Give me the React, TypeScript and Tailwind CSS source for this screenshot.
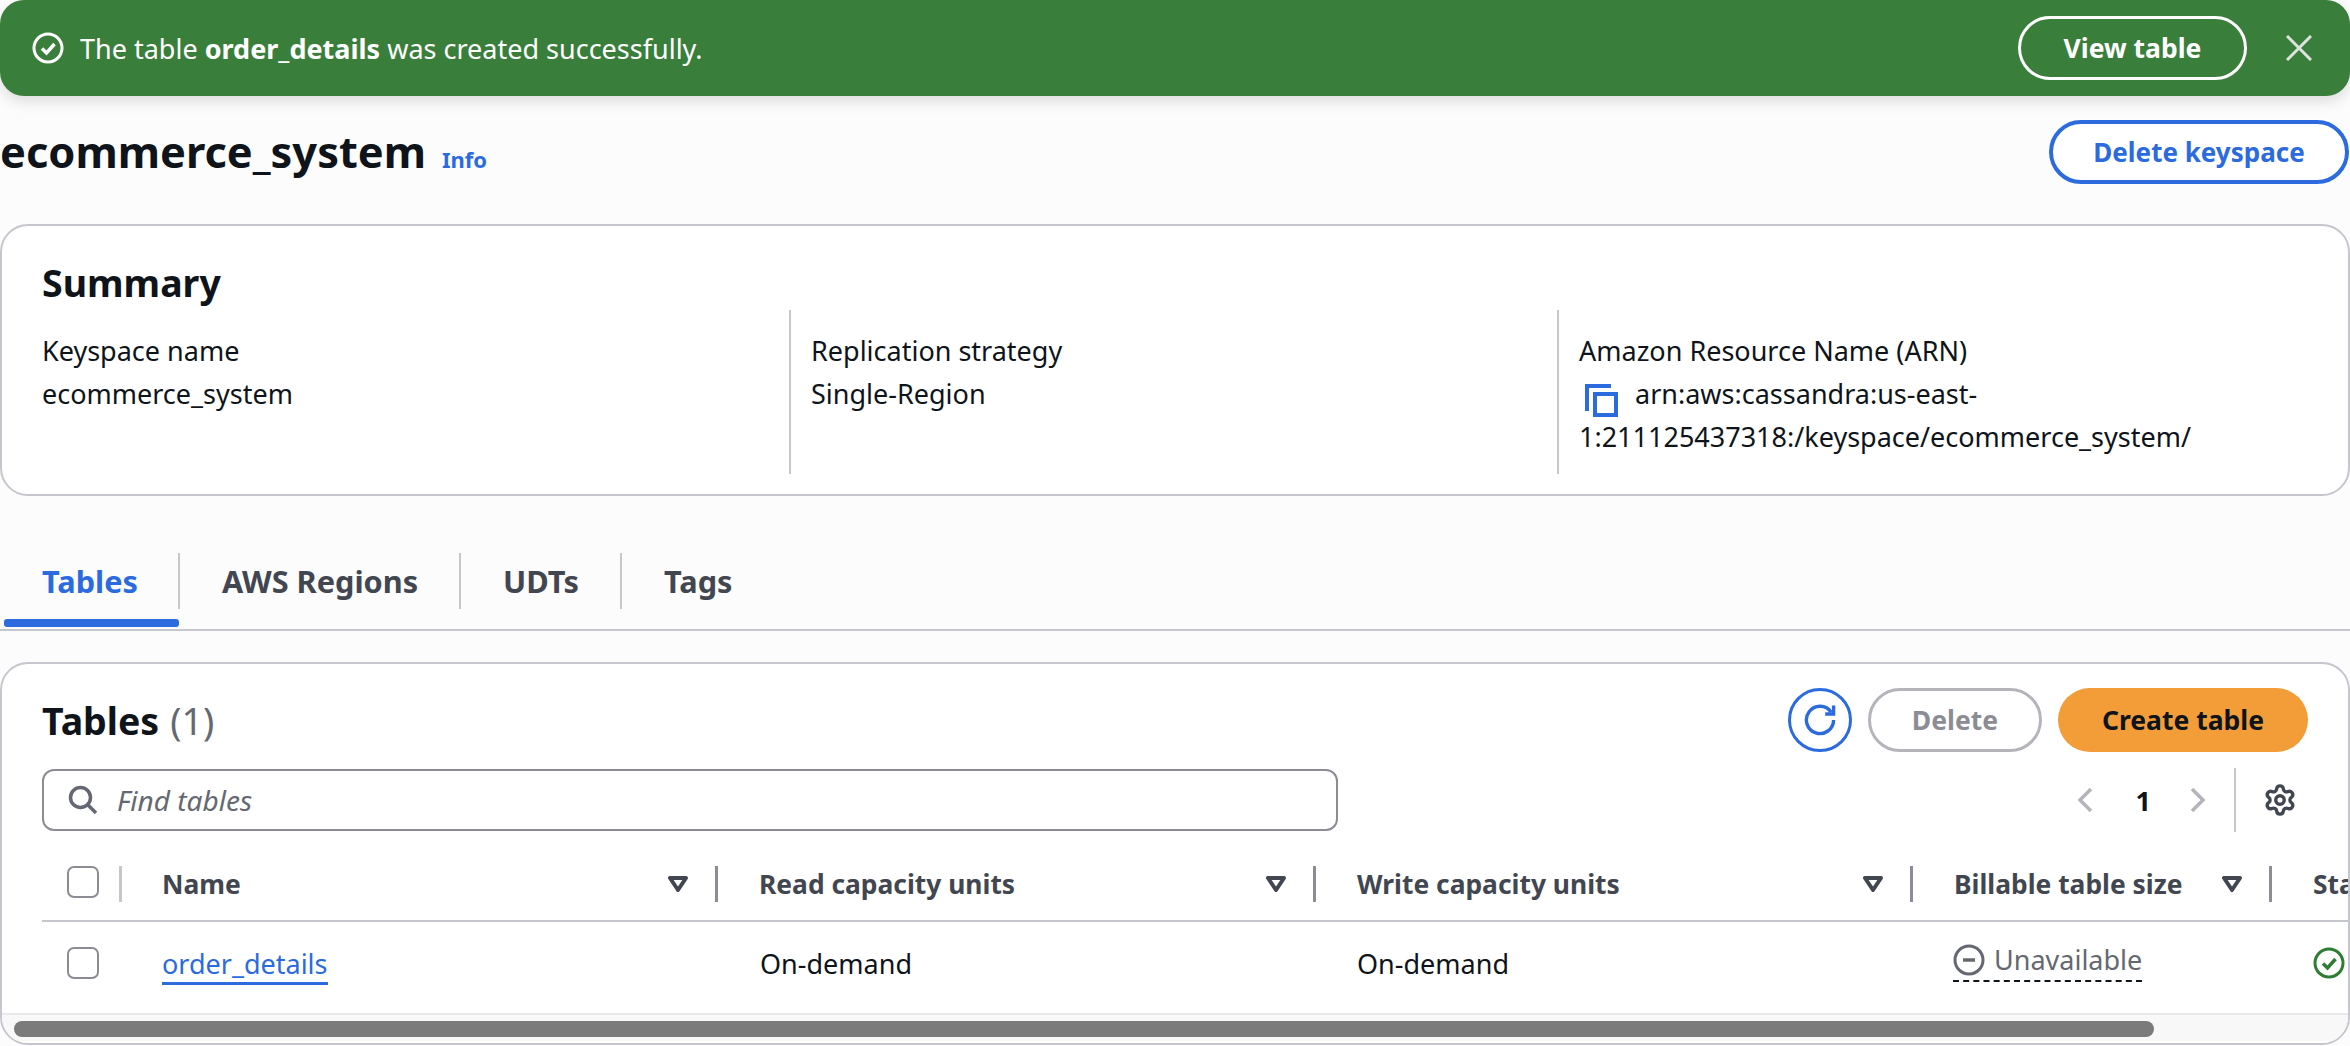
import { Settings } from "lucide-react";

function CheckCircle({ className }: { className: string }) {
  return (
    <svg viewBox="0 0 32 32" className={className} fill="none" stroke="currentColor" strokeWidth="3">
      <circle cx="16" cy="16" r="14" />
      <path d="M10 16.5l4.5 4.5 8-9" strokeWidth="3.5" />
    </svg>
  );
}

function Caret() {
  return (
    <svg viewBox="0 0 20 16" className="h-4 w-5 shrink-0 text-[#424650]" fill="none" stroke="currentColor" strokeWidth="4" strokeLinejoin="round">
      <path d="M2 2h16l-8 12z" />
    </svg>
  );
}

function Checkbox() {
  return <div className="h-[32px] w-[32px] shrink-0 rounded-[7px] border-2 border-[#8c8c94] bg-white" />;
}

function HeaderCell({ label, width, divider }: { label: string; width: string; divider?: boolean }) {
  return (
    <div className={`flex h-[36px] shrink-0 items-center ${width}`}>
      <span className="ml-[41px] whitespace-nowrap text-[26.4px] font-bold text-[#424650]">{label}</span>
      {divider && <div className="ml-auto mr-[27px]"><Caret /></div>}
      {divider && <div className="h-[36px] w-[3px] bg-[#8c8c94]" />}
    </div>
  );
}

export default function App() {
  return (
    <div className="h-[1046px] w-[2350px] overflow-hidden bg-[#fcfcfd] font-['Noto_Sans',sans-serif] text-[27px] leading-[43px] text-[#0f141a]">
      <div className="flex h-[96px] items-center rounded-[24px] bg-[#3a7e3c] pl-[32px] pr-[38px] text-white shadow-[0_6px_14px_rgba(0,0,0,0.12)]">
        <CheckCircle className="h-[32px] w-[32px]" />
        <span className="ml-[16px]">The table <b>order_details</b> was created successfully.</span>
        <div className="ml-auto flex h-[64px] w-[229px] items-center justify-center rounded-full border-[3px] border-white text-[26.5px] font-bold">View table</div>
        <svg viewBox="0 0 26 26" className="ml-[39px] h-[26px] w-[26px] text-[#dfe3df]" fill="none" stroke="currentColor" strokeWidth="3">
          <path d="M1 1l24 24M25 1L1 25" />
        </svg>
      </div>

      <div className="mt-[24px] flex h-[64px] items-center justify-between pr-[1px]">
        <div className="flex items-baseline">
          <h1 className="text-[43.4px] font-bold leading-[60px]">ecommerce_system</h1>
          <span className="ml-[16px] text-[22px] font-bold text-[#2b6bde]">Info</span>
        </div>
        <div className="flex h-[64px] w-[300px] items-center justify-center rounded-full border-[4px] border-[#2b6bde] bg-white text-[26px] font-bold text-[#2b6bde]">Delete keyspace</div>
      </div>

      <section className="mt-[40px] h-[272px] rounded-[28px] border-[2px] border-[#c6c6cd] bg-white pl-[40px] pt-[31px]">
        <h2 className="text-[37.5px] font-bold leading-[52px]">Summary</h2>
        <div className="mt-[1px] flex">
          <div className="h-[164px] w-[747px] shrink-0 pt-[19px]">
            <div>Keyspace name</div>
            <div>ecommerce_system</div>
          </div>
          <div className="h-[164px] w-[768px] shrink-0 border-l-[2px] border-[#c6c6cd] pl-[20px] pt-[19px]">
            <div>Replication strategy</div>
            <div>Single-Region</div>
          </div>
          <div className="h-[164px] flex-1 border-l-[2px] border-[#c6c6cd] pl-[20px] pt-[19px]">
            <div>Amazon Resource Name (ARN)</div>
            <div className="w-[680px]">
              <svg viewBox="0 0 33 33" className="mb-[-8px] ml-[6px] mr-[17px] inline-block h-[33px] w-[33px]" fill="none" stroke="#2b6bde" strokeWidth="4">
                <path d="M2 27V2h24" />
                <path d="M10 10h21v21H10z" />
              </svg>
              arn:aws:cassandra:us-east-1:211125437318:/keyspace/ecommerce_system/
            </div>
          </div>
        </div>
      </section>

      <nav className="mt-[57px] flex h-[78px] border-b-[2px] border-[#c6c6cd] pb-[0px]">
        <div className="relative flex h-[56px] w-[180px] shrink-0 items-center border-r-[2px] border-[#c6c6cd] pl-[42px] text-[30.7px] font-bold text-[#2b6bde]">
          Tables
          <div className="absolute left-[4px] top-[66px] h-[8px] w-[175px] rounded-[3px] bg-[#2b6bde]" />
        </div>
        <div className="flex h-[56px] w-[281px] shrink-0 items-center border-r-[2px] border-[#c6c6cd] pl-[42px] text-[30.7px] font-bold text-[#424650]">AWS Regions</div>
        <div className="flex h-[56px] w-[161px] shrink-0 items-center border-r-[2px] border-[#c6c6cd] pl-[42px] text-[30.7px] font-bold text-[#424650]">UDTs</div>
        <div className="flex h-[56px] items-center pl-[42px] text-[30.7px] font-bold text-[#424650]">Tags</div>
      </nav>

      <section className="mt-[31px] h-[383px] overflow-hidden rounded-[28px] border-[2px] border-[#c6c6cd] bg-white">
        <div className="flex h-[104px] items-start pl-[40px] pr-[40px] pt-[24px]">
          <h2 className="flex h-[64px] items-center text-[37.5px] font-bold">
            Tables<span className="ml-[11px] font-normal text-[#656871]">(1)</span>
          </h2>
          <div className="ml-auto flex h-[64px] w-[64px] items-center justify-center rounded-full border-[3px] border-[#2b6bde] text-[#2b6bde]">
            <svg viewBox="0 0 16 16" className="h-[32px] w-[32px]" fill="none" stroke="currentColor" strokeWidth="1.7">
              <path d="M14.8 8a6.8 6.8 0 1 1-1.2-3.9" />
              <path d="M14.8 .8v4.2h-4.2" />
            </svg>
          </div>
          <div className="ml-[16px] flex h-[64px] w-[174px] items-center justify-center rounded-full border-[3px] border-[#b4b4bb] text-[26.5px] font-bold text-[#8c8c94]">Delete</div>
          <div className="ml-[16px] flex h-[64px] w-[250px] items-center justify-center rounded-full bg-[#f29d38] text-[26.5px] font-bold">Create table</div>
        </div>

        <div className="flex h-[64px] items-center pl-[40px] pr-[51px]">
          <div className="flex h-[62px] w-[1296px] items-center rounded-[12px] border-[2px] border-[#8c8c94] pl-[24px]">
            <svg viewBox="0 0 30 30" className="h-[30px] w-[30px] text-[#656871]" fill="none" stroke="currentColor" strokeWidth="3.5">
              <circle cx="12.5" cy="12.5" r="10" />
              <path d="M19.5 19.5l8.5 8.5" />
            </svg>
            <span className="ml-[19px] text-[28px] italic text-[#656871]">Find tables</span>
          </div>
          <svg viewBox="0 0 16 26" className="ml-[739px] h-[26px] w-[16px] text-[#b4b4bb]" fill="none" stroke="currentColor" strokeWidth="3.5">
            <path d="M14 2L3 13l11 11" />
          </svg>
          <span className="ml-[43px] font-bold">1</span>
          <svg viewBox="0 0 16 26" className="ml-[39px] h-[26px] w-[16px] text-[#b4b4bb]" fill="none" stroke="currentColor" strokeWidth="3.5">
            <path d="M2 2l11 11L2 24" />
          </svg>
          <div className="ml-[28px] h-[64px] w-[2px] bg-[#c6c6cd]" />
          <Settings className="ml-[27px] h-[34px] w-[34px] text-[#424650]" strokeWidth={2.4} />
        </div>

        <div className="flex h-[88px] items-start overflow-hidden pl-[65px] pt-[34px]">
          <Checkbox />
          <div className="ml-[20px] h-[36px] w-[3px] shrink-0 bg-[#c6c6cd]" />
          <HeaderCell label="Name" width="w-[597px] -ml-[1px]" divider />
          <HeaderCell label="Read capacity units" width="w-[598px]" divider />
          <HeaderCell label="Write capacity units" width="w-[597px]" divider />
          <HeaderCell label="Billable table size" width="w-[359px]" divider />
          <HeaderCell label="Status" width="w-[300px]" />
        </div>

        <div className="ml-[40px] h-[2px] bg-[#c6c6cd]" />

        <div className="flex h-[91px] items-center overflow-hidden pb-[9px] pl-[65px]">
          <Checkbox />
          <div className="ml-[63px] w-[598px] shrink-0">
            <span className="border-b-[3px] border-[#2b6bde] leading-[34px] text-[#2b6bde]">order_details</span>
          </div>
          <div className="w-[597px] shrink-0">On-demand</div>
          <div className="w-[596px] shrink-0">On-demand</div>
          <div className="w-[360px] shrink-0">
            <span className="inline-flex h-[42px] items-center border-b-[2px] border-dashed border-[#0f141a] text-[#656871]">
              <svg viewBox="0 0 32 32" className="mr-[9px] h-[32px] w-[32px]" fill="none" stroke="currentColor" strokeWidth="3">
                <circle cx="16" cy="16" r="14" />
                <path d="M10 16h12" strokeWidth="3.5" />
              </svg>
              Unavailable
            </span>
          </div>
          <CheckCircle className="h-[32px] w-[32px] shrink-0 text-[#2e7d32]" />
        </div>

        <div className="h-[28px] border-t-[2px] border-[#e9e9ed] bg-[#f8f8f8] pl-[12px] pt-[6px]">
          <div className="h-[16px] w-[2140px] rounded-full bg-[#7b7b7b]" />
        </div>
      </section>
    </div>
  );
}
